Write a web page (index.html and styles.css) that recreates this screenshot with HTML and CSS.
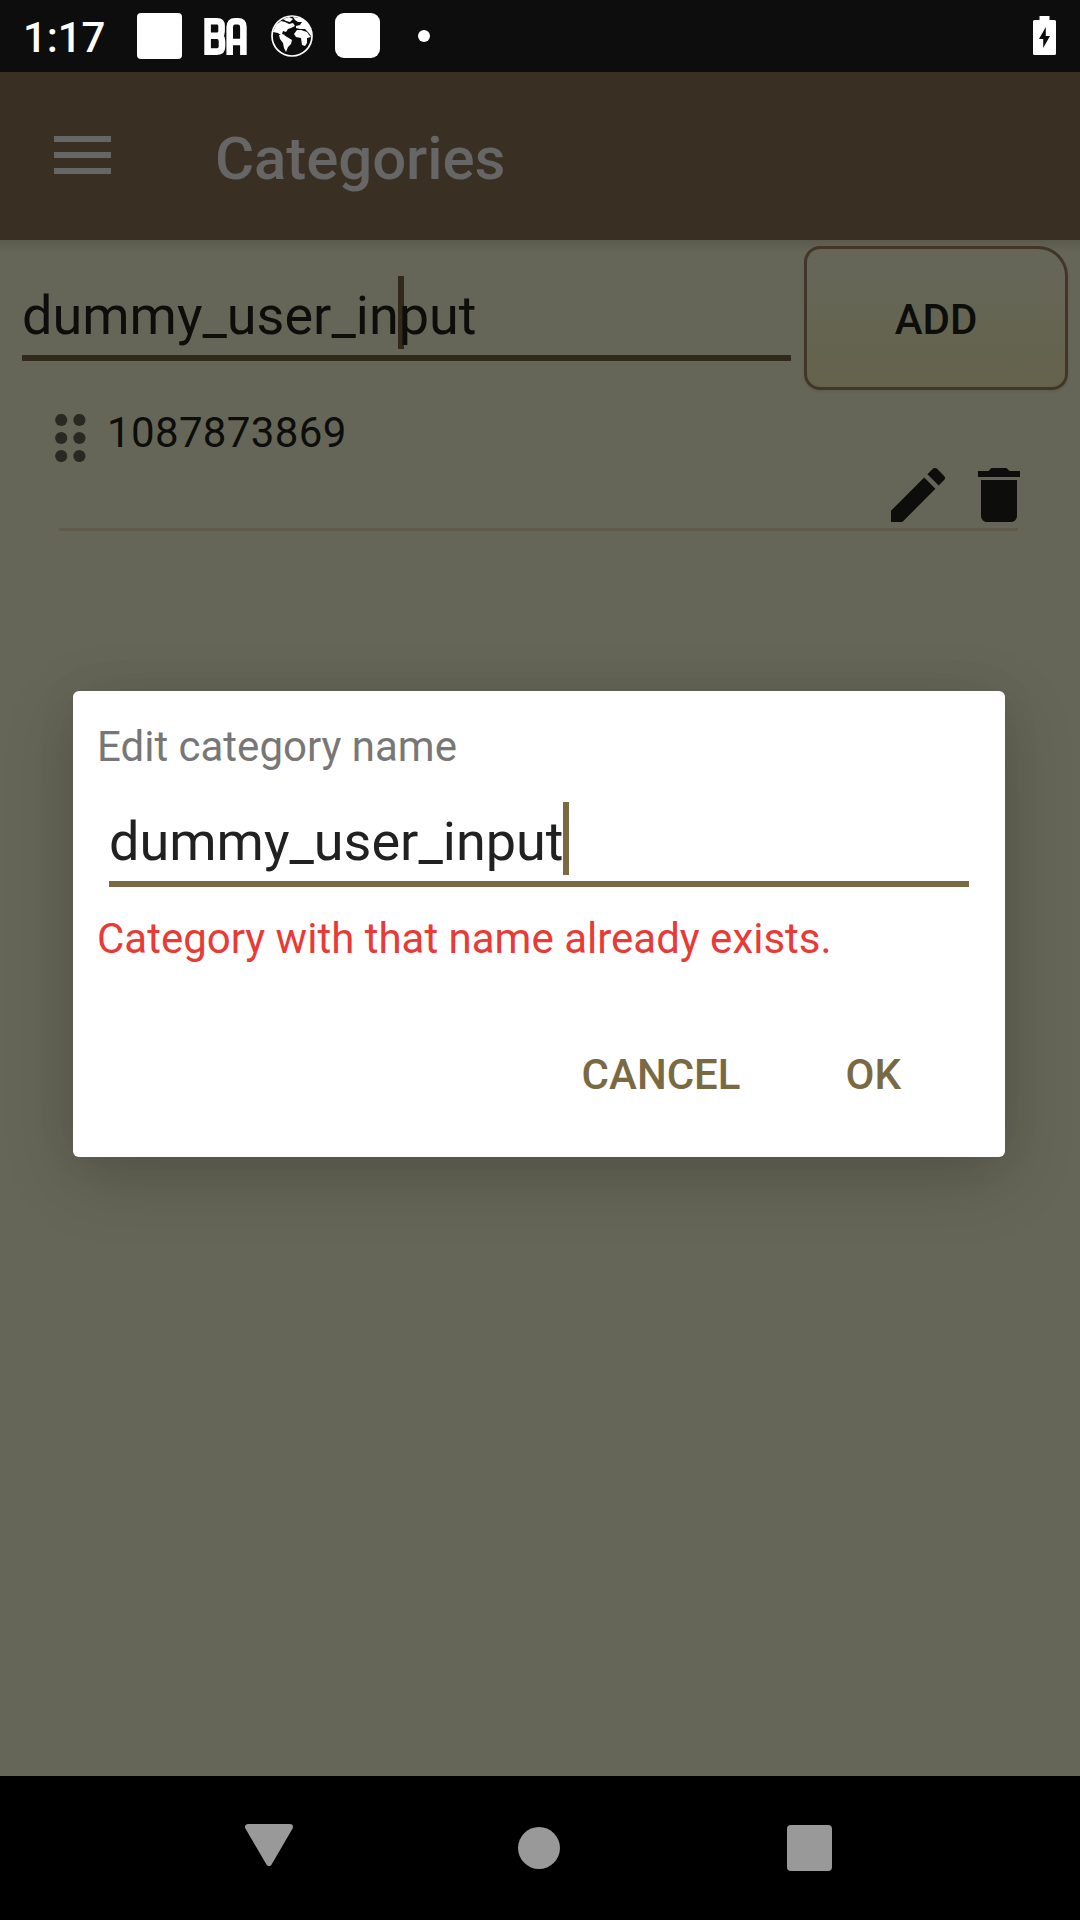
FILE: index.html
```html
<!DOCTYPE html>
<html lang="en">
<head>
<meta charset="utf-8">
<title>Categories</title>
<link rel="stylesheet" href="styles.css">
</head>
<body>
<div class="screen">
  <header class="status">
    <span class="clock">1:17</span>
    <span class="note-square"></span>
    <svg class="ba" viewBox="0 0 43 37" fill="none" stroke="#fff" stroke-width="6.6"><path d="M3.600 3.300H13Q17.600 3.300 17.600 8V13Q17.600 17.800 13 17.800Q18 17.800 18 23V28.500Q18 33.600 13 33.600H3.600ZM5 17.800H13"/><path d="M25.700 37V9Q25.700 3.300 31 3.300H34Q39.400 3.300 39.400 9V37M26 24H39"/></svg>
    <svg class="globe" viewBox="0 0 42 42"><circle cx="21" cy="21" r="20" fill="none" stroke="#fff" stroke-width="1.700"/><g fill="#fff"><path d="M2 17L5 10L10 6L14 7L18 9L22 8L24 11L20 13L17 14L15 17L12 16L11 19L14 20L11 21L7 18Z"/><path d="M12 4L18 2L22 4L19 7L15 6Z"/><path d="M8 20L13 20L16 22L21 25L20 29L17 32L15 37L13 33L12 28L9 24Z"/><path d="M22 2L30 3L36 8L40 15L40 21L37 17L34 14L29 14L25 13L25 11L29 10L31 7L27 7L24 5Z"/><path d="M23 19L26 15L30 15L36 17L38 20L40 22L36 23L36 28L34 31L31 30L30 23L25 22Z"/></g></svg>
    <span class="note-round"></span>
    <span class="dot"></span>
    <svg class="battery" viewBox="0 0 23 39"><path fill="#fff" fill-rule="evenodd" d="M6.500 0H16.500V4H21.500Q23 4 23 5.500V37.500Q23 39 21.500 39H1.500Q0 39 0 37.500V5.500Q0 4 1.500 4H6.500ZM12.800 11L6 23H10.200V32L17 20H12.800Z"/></svg>
  </header>
  <div class="appbar">
    <svg class="menu" viewBox="0 0 57 38" fill="#666"><path d="M0 0H57V6H0ZM0 16H57V22H0ZM0 32H57V38H0Z"/></svg>
    <h1 class="title">Categories</h1>
  </div>
  <main class="content">
    <div class="entry">
      <div class="field">dummy_user_in<i class="caret"></i>put</div>
      <button class="add">ADD</button>
    </div>
    <div class="item">
      <svg class="grip" viewBox="0 0 31 48" fill="#282922"><circle cx="6.200" cy="6" r="6.100"/><circle cx="24.400" cy="6" r="6.100"/><circle cx="6.200" cy="24" r="6.100"/><circle cx="24.400" cy="24" r="6.100"/><circle cx="6.200" cy="42" r="6.100"/><circle cx="24.400" cy="42" r="6.100"/></svg>
      <span class="name">1087873869</span>
      <svg class="edit" viewBox="3 3 18 18"><path d="M3 17.250V21h3.750L17.810 9.940l-3.750-3.750L3 17.250zM20.710 7.040c.39-.39.39-1.020 0-1.410l-2.340-2.340c-.39-.39-1.020-.39-1.410 0l-1.830 1.830 3.750 3.750 1.830-1.830z"/></svg>
      <svg class="delete" viewBox="5 3 14 18"><path d="M6 19c0 1.100.9 2 2 2h8c1.100 0 2-.9 2-2V7H6v12zM19 4h-3.500l-1-1h-5l-1 1H5v2h14V4z"/></svg>
    </div>
  </main>
  <nav class="nav">
    <svg class="back" viewBox="0 0 48 42"><path d="M3 3H45L24 39Z" fill="#999" stroke="#999" stroke-width="6" stroke-linejoin="round"/></svg>
    <span class="home"></span>
    <span class="recent"></span>
  </nav>
  <section class="dialog">
    <p class="label">Edit category name</p>
    <div class="dialog-field">dummy_user_input<i class="caret"></i></div>
    <p class="error">Category with that name already exists.</p>
    <div class="actions"><button>CANCEL</button><button>OK</button></div>
  </section>
</div>
</body>
</html>
```
FILE: styles.css
```css
* { box-sizing: border-box; }
body { margin: 0; font-family: Roboto, sans-serif; }
p, h1 { margin: 0; }
button { border: 0; background: none; padding: 0; font: 500 42px/49px Roboto, sans-serif; }
svg { display: block; flex: none; }
.screen { position: relative; width: 1080px; height: 1920px; display: flex; flex-direction: column; overflow: hidden; background: #656657; }
.status { height: 72px; flex: none; background: #0d0d0d; display: flex; align-items: flex-start; }
.clock { width: 114px; margin-left: 23px; padding-top: 13px; font-size: 42px; line-height: 49px; font-weight: 500; color: #fff; letter-spacing: -.1px; }
.note-square { width: 45px; height: 46px; margin: 13px 0 0 0; border-radius: 4px; background: #fff; }
.ba { width: 43px; height: 37px; margin: 18px 0 0 22px; }
.globe { width: 42px; height: 42px; margin: 15px 0 0 24px; }
.note-round { width: 45px; height: 45px; margin: 13px 0 0 22px; border-radius: 9px; background: #fff; }
.dot { width: 12px; height: 12px; margin: 30px 0 0 38px; border-radius: 50%; background: #fff; }
.battery { width: 23px; height: 39px; margin: 16px 24px 0 auto; }
.appbar { height: 168px; flex: none; background: #392f22; display: flex; align-items: flex-start; }
.menu { width: 57px; height: 38px; margin: 64px 0 0 54px; }
.title { margin: 52px 0 0 104px; font-size: 60px; line-height: 70px; font-weight: 500; color: #666; letter-spacing: -.1px; }
.content { flex: 1; background: linear-gradient(#5a5b4e, #656657 12px); }
.entry { display: flex; align-items: flex-start; padding: 6px 12px 0 22px; }
.field { width: 769px; height: 115px; padding-top: 30px; border-bottom: 6px solid #312a1b; font-size: 54px; line-height: 63px; color: #0d0e0c; white-space: nowrap; }
.caret { display: inline-block; width: 6px; height: 73px; margin: 0 -5px 0 -1px; vertical-align: -15px; background: #312a1b; }
.add { width: 264px; height: 144px; margin-left: auto; padding-top: 2px; border: 3px solid #443529; border-radius: 16px 30px 16px 16px; background: linear-gradient(#656657 20%, #64624b); color: #0d0e0c; box-shadow: 0 2px 3px rgba(0,0,0,.08); }
.item { height: 141px; margin: 0 62px 0 59px; border-bottom: 3px solid #605a4b; display: flex; align-items: flex-start; }
.grip { width: 31px; height: 48px; margin: 24px 0 0 -4px; }
.name { flex: 1; margin: 18px 0 0 21px; font-size: 42px; line-height: 49px; color: #0d0e0c; letter-spacing: .36px; }
.edit { width: 54px; height: 54px; margin-top: 78px; fill: #0d0e0c; }
.delete { width: 42px; height: 54px; margin: 78px -2px 0 33px; fill: #0d0e0c; }
.nav { height: 144px; flex: none; background: #000; display: flex; align-items: flex-start; }
.back { width: 48px; height: 42px; margin: 48px 0 0 245px; }
.home { width: 42px; height: 42px; margin: 51px 0 0 225px; border-radius: 50%; background: #999; }
.recent { width: 45px; height: 46px; margin: 49px 0 0 227px; border-radius: 4px; background: #999; }
.dialog { position: absolute; left: 73px; top: 691px; width: 932px; height: 466px; padding: 31px 36px 0 24px; border-radius: 6px; background: #fff; box-shadow: 0 0 50px rgba(0,0,0,.04), 0 20px 70px rgba(0,0,0,.18); }
.label { font-size: 42px; line-height: 49px; color: #777; }
.dialog-field { height: 116px; margin: 0 0 0 12px; padding-top: 31px; border-bottom: 6px solid #7a6a43; font-size: 54px; line-height: 63px; color: #212121; white-space: nowrap; }
.dialog-field .caret { background: #7a6a43; }
.error { margin-top: 27px; font-size: 42px; line-height: 49px; color: #e83a36; }
.actions { margin-top: 87px; display: flex; justify-content: flex-end; gap: 105px; padding-right: 68px; }
.actions button { color: #7a6a43; }
```
